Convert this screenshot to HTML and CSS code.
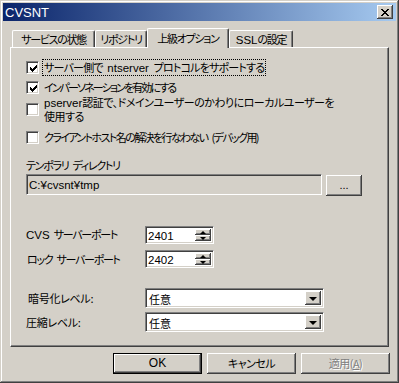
FILE: index.html
```html
<!DOCTYPE html>
<html lang="ja">
<head>
<meta charset="utf-8">
<title>CVSNT</title>
<link rel="stylesheet" href="styles.css">
</head>
<body>
<div class="window">
  <div class="titlebar">
    <span class="title">CVSNT</span>
    <span class="close"><svg width="8" height="7" viewBox="0 0 8 7" shape-rendering="crispEdges"><path d="M0 0h2v1h1v1h2V1h1V0h2v1H7v1H6v1H5v1h1v1h1v1h1v1H6V6H5V5H3v1H2v1H0V6h1V5h1V4h1V3H2V2H1V1H0z" fill="#000"/></svg></span>
  </div>
  <div class="tabs">
    <div class="tab t1">サービスの状態</div>
    <div class="tab t2">リポジトリ</div>
    <div class="tab t3 active">上級オプション</div>
    <div class="tab t4"><span class="lat">SSL</span>の設定</div>
  </div>
  <div class="panel">
    <div class="row r1">
      <span class="cb"><svg width="9" height="9" viewBox="0 0 9 9" shape-rendering="crispEdges"><path d="M7 1h1v3H7v1H6v1H5v1H4v1H3V7H2V6H1V3h1v1h1v1h1V4h1V3h1V2h1z" fill="#000"/></svg></span>
      <span class="lbl focus">サーバー側で <span class="lat">ntserver</span> プロトコルをサポートする</span>
    </div>
    <div class="row r2">
      <span class="cb"><svg width="9" height="9" viewBox="0 0 9 9" shape-rendering="crispEdges"><path d="M7 1h1v3H7v1H6v1H5v1H4v1H3V7H2V6H1V3h1v1h1v1h1V4h1V3h1V2h1z" fill="#000"/></svg></span>
      <span class="lbl">インパーソネーションを有効にする</span>
    </div>
    <div class="row r3">
      <span class="cb"></span>
      <span class="lbl two"><span class="lat">pserver</span>認証で、ドメインユーザーのかわりにローカルユーザーを<br>使用する</span>
    </div>
    <div class="row r4">
      <span class="cb"></span>
      <span class="lbl">クライアントホスト名の解決を行なわない (デバッグ用)</span>
    </div>
    <div class="caption">テンポラリ ディレクトリ</div>
    <div class="dirrow">
      <div class="field dir">C:¥cvsnt¥tmp</div>
      <div class="btn browse">...</div>
    </div>
    <div class="frow p1">
      <span class="flabel"><span class="lat">CVS</span> サーバーポート</span>
      <div class="field edit"><span class="val num">2401</span>
        <span class="spin"><span class="sb"><i class="up"></i></span><span class="sb"><i class="dn"></i></span></span>
      </div>
    </div>
    <div class="frow p2">
      <span class="flabel ind1">ロック サーバーポート</span>
      <div class="field edit"><span class="val num">2402</span>
        <span class="spin"><span class="sb"><i class="up"></i></span><span class="sb"><i class="dn"></i></span></span>
      </div>
    </div>
    <div class="frow c1">
      <span class="flabel ind2 loose">暗号化レベル:</span>
      <div class="field combo"><span class="val">任意</span><span class="drop"><i class="dd"></i></span></div>
    </div>
    <div class="frow c2">
      <span class="flabel loose">圧縮レベル:</span>
      <div class="field combo"><span class="val">任意</span><span class="drop"><i class="dd"></i></span></div>
    </div>
  </div>
  <div class="buttons">
    <div class="btn push default">OK</div>
    <div class="btn push">キャンセル</div>
    <div class="btn push disabled">適用(<u>A</u>)</div>
  </div>
</div>
</body>
</html>
```
FILE: styles.css
```css
html, body {
  margin: 0;
  padding: 0;
  background: #d4d0c8;
  overflow: hidden;
}
body {
  font-family: "Noto Sans CJK JP", "Noto Sans", sans-serif;
  font-size: 11px;
  font-weight: 400;
  line-height: 13px;
  letter-spacing: -1.3px;
  word-spacing: 3px;
  font-feature-settings: "palt" 1;
  color: #000;
}
.lat {
  font-family: "Liberation Sans", sans-serif;
  font-weight: 400;
  font-size: 11.5px;
  letter-spacing: 0;
}
.window {
  width: 399px;
  height: 383px;
  box-sizing: border-box;
  padding: 3px;
  background: #d4d0c8;
  box-shadow: inset -1px -1px #404040, inset 1px 1px #d4d0c8, inset -2px -2px #808080, inset 2px 2px #fff;
}
.titlebar {
  height: 18px;
  display: flex;
  align-items: center;
  justify-content: space-between;
  background: linear-gradient(to right, #0a246a, #a6caf0);
  padding: 0 3px 0 2px;
}
.title {
  color: #fff;
  font-family: "Liberation Sans", sans-serif;
  font-weight: 400;
  font-size: 13px;
  letter-spacing: 0;
  line-height: 16px;
  padding-top: 1px;
}
.close {
  width: 16px;
  height: 14px;
  box-sizing: border-box;
  background: #d4d0c8;
  display: flex;
  align-items: center;
  justify-content: center;
  box-shadow: inset -1px -1px #404040, inset 1px 1px #fff, inset -2px -2px #808080;
}
.close svg { display: block; }

/* tabs */
.tabs {
  display: flex;
  align-items: flex-end;
  height: 19px;
  margin: 7px 0 0 9px;
  position: relative;
  z-index: 1;
}
.tab {
  height: 17px;
  box-sizing: border-box;
  border-top: 1px solid #fff;
  border-left: 1px solid #fff;
  border-right: 1px solid #404040;
  box-shadow: inset -1px 0 #808080;
  border-radius: 2px 2px 0 0;
  text-align: center;
  white-space: nowrap;
  line-height: 15px;
  padding-top: 1px;
  background: #d4d0c8;
}
.t1 { width: 83px; }
.t2 { width: 52px; }
.t3 { width: 82px; }
.t4 { width: 64px; }
.tab.active {
  height: 20px;
  margin-bottom: -1px;
  line-height: 16px;
}
.panel {
  margin-left: 7px;
  width: 379px;
  height: 300px;
  box-sizing: border-box;
  border-top: 1px solid #fff;
  border-left: 1px solid #fff;
  border-right: 1px solid #404040;
  border-bottom: 1px solid #404040;
  box-shadow: inset -1px -1px #808080;
  padding-left: 15px;
  display: flex;
  flex-direction: column;
  align-items: flex-start;
}
.row {
  display: flex;
  align-items: center;
  height: 13px;
}
.r1 { margin-top: 13px; }
.r2 { margin-top: 7px; }
.r3 { margin-top: 2px; height: 26px; }
.r4 { margin-top: 9px; }
.r1 .lbl { letter-spacing: -0.8px; }
.r2 .lbl { letter-spacing: -1.9px; }
.r3 .lbl { letter-spacing: -0.5px; }
.r4 .lbl { letter-spacing: -1.6px; }
.cb {
  width: 13px;
  height: 13px;
  box-sizing: border-box;
  flex: none;
  background: #fff;
  border-top: 1px solid #808080;
  border-left: 1px solid #808080;
  border-right: 1px solid #fff;
  border-bottom: 1px solid #fff;
  box-shadow: inset 1px 1px #404040, inset -1px -1px #d4d0c8;
  display: flex;
  align-items: center;
  justify-content: center;
}
.cb svg { display: block; margin: 1px 0 0 1px; }
.lbl {
  margin-left: 5px;
  white-space: nowrap;
}
.lbl .lat { letter-spacing: 0; }
.lbl.focus {
  margin-left: 4px;
  padding: 0 1px;
  outline: 1px dotted #000;
  line-height: 14px;
}
.lbl.two { line-height: 13px; }
.caption {
  margin-top: 15px;
  height: 13px;
}
.dirrow {
  margin-top: 2px;
  display: flex;
  align-items: flex-start;
  gap: 4px;
}
.field {
  box-sizing: border-box;
  border-top: 1px solid #808080;
  border-left: 1px solid #808080;
  border-right: 1px solid #fff;
  border-bottom: 1px solid #fff;
  box-shadow: inset 1px 1px #404040, inset -1px -1px #d4d0c8;
  background: #fff;
}
.field.dir {
  width: 296px;
  height: 21px;
  background: #d4d0c8;
  padding: 3px 0 0 2px;
  line-height: 14px;
  font-family: "Liberation Sans", sans-serif;
  font-weight: 400;
  font-size: 11.5px;
  letter-spacing: 0;
}
.btn {
  box-sizing: border-box;
  background: #d4d0c8;
  box-shadow: inset -1px -1px #404040, inset 1px 1px #fff, inset -2px -2px #808080;
  display: flex;
  align-items: center;
  justify-content: center;
  white-space: nowrap;
}
.btn.browse {
  width: 36px;
  height: 21px;
  margin-top: 1px;
  font-family: "Liberation Sans", sans-serif;
  font-weight: 400;
  font-size: 11px;
  letter-spacing: 0;
  padding-bottom: 1px;
}
.frow {
  display: flex;
  align-items: center;
}
.p1 { margin-top: 30px; }
.p2 { margin-top: 6px; }
.c1 { margin-top: 20px; }
.c2 { margin-top: 4px; }
.flabel {
  width: 119px;
  flex: none;
  box-sizing: border-box;
  white-space: nowrap;
}
.flabel.loose { letter-spacing: -0.3px; }
.flabel.ind1 { padding-left: 1px; }
.flabel.ind2 { padding-left: 2px; }
.field.edit {
  width: 69px;
  height: 18px;
  display: flex;
  align-items: stretch;
  padding: 2px;
}
.val {
  flex: 1;
  line-height: 14px;
  letter-spacing: 0;
}
.val.num {
  font-family: "Liberation Sans", sans-serif;
  font-weight: 400;
  font-size: 11.5px;
}
.spin {
  width: 16px;
  display: flex;
  flex-direction: column;
}
.sb {
  flex: 1;
  background: #d4d0c8;
  box-shadow: inset -1px -1px #404040, inset 1px 1px #fff, inset -2px -2px #808080;
  display: flex;
  align-items: center;
  justify-content: center;
}
.up, .dn, .dd {
  display: block;
  width: 0;
  height: 0;
  border-left: 3px solid transparent;
  border-right: 3px solid transparent;
}
.up { border-bottom: 3px solid #000; }
.dn { border-top: 3px solid #000; }
.field.combo {
  width: 179px;
  height: 20px;
  display: flex;
  align-items: stretch;
  padding: 2px;
}
.combo .val { padding: 1px 0 0 1px; }
.drop {
  width: 16px;
  background: #d4d0c8;
  box-shadow: inset -1px -1px #404040, inset 1px 1px #fff, inset -2px -2px #808080;
  display: flex;
  align-items: center;
  justify-content: center;
}
.dd {
  border-left: 4px solid transparent;
  border-right: 4px solid transparent;
  border-top: 4px solid #000;
  margin: 1px 0 0 0;
}
.buttons {
  display: flex;
  gap: 5px;
  margin: 6px 0 0 110px;
}
.btn.push {
  width: 89px;
  height: 21px;
  padding-bottom: 1px;
  letter-spacing: -0.5px;
}
.btn.default {
  box-shadow: inset 0 0 0 1px #000, inset -2px -2px #404040, inset 2px 2px #fff, inset -3px -3px #808080;
  font-family: "Liberation Sans", sans-serif;
  font-weight: 400;
  font-size: 12px;
  letter-spacing: 0;
}
.btn.disabled {
  color: #808080;
  text-shadow: 1px 1px #fff;
}
.btn.disabled u { text-decoration-color: #808080; }
```
